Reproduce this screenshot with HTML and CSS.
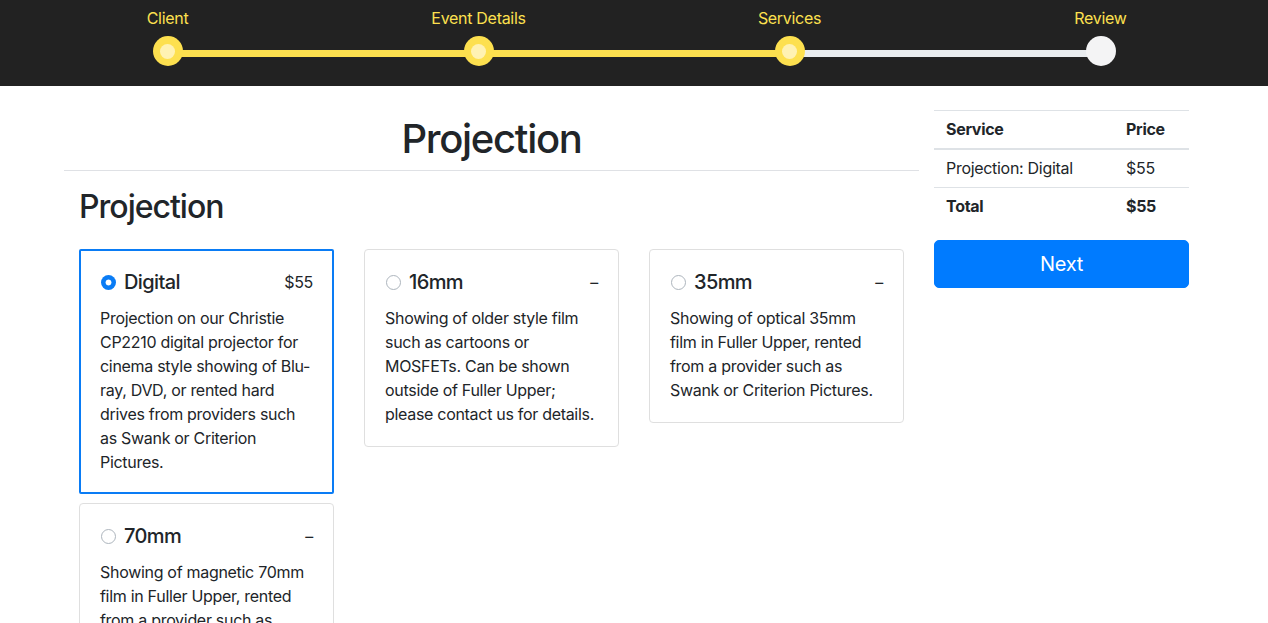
FILE: index.html
```html
<!DOCTYPE html>
<html lang="en">
<head>
<meta charset="utf-8">
<title>Projection</title>
<link rel="stylesheet" href="styles.css">
</head>
<body>
<header class="topbar">
  <ol class="stepper">
    <li class="step done"><span class="step-label">Client</span><span class="step-dot"></span></li>
    <li class="step done"><span class="step-label">Event Details</span><span class="step-dot"></span></li>
    <li class="step current"><span class="step-label">Services</span><span class="step-dot"></span></li>
    <li class="step todo"><span class="step-label">Review</span><span class="step-dot"></span></li>
  </ol>
</header>
<main class="container">
  <section class="col-main">
    <h1 class="page-title">Projection</h1>
    <hr class="divider">
    <h2 class="section-title">Projection</h2>
    <div class="options">
      <div class="card selected">
        <div class="card-head">
          <span class="radio checked"></span>
          <span class="card-title">Digital</span>
          <span class="card-price">$55</span>
        </div>
        <p class="card-text">Projection on our Christie CP2210 digital projector for cinema style showing of Blu-ray, DVD, or rented hard drives from providers such as Swank or Criterion Pictures.</p>
      </div>
      <div class="card">
        <div class="card-head">
          <span class="radio"></span>
          <span class="card-title">16mm</span>
          <span class="card-price">–</span>
        </div>
        <p class="card-text">Showing of older style film such as cartoons or MOSFETs. Can be shown outside of Fuller Upper; please contact us for details.</p>
      </div>
      <div class="card">
        <div class="card-head">
          <span class="radio"></span>
          <span class="card-title">35mm</span>
          <span class="card-price">–</span>
        </div>
        <p class="card-text">Showing of optical 35mm film in Fuller Upper, rented from a provider such as Swank or Criterion Pictures.</p>
      </div>
      <div class="card">
        <div class="card-head">
          <span class="radio"></span>
          <span class="card-title">70mm</span>
          <span class="card-price">–</span>
        </div>
        <p class="card-text">Showing of magnetic 70mm film in Fuller Upper, rented from a provider such as Swank or Criterion Pictures.</p>
      </div>
    </div>
  </section>
  <aside class="col-side">
    <table class="summary">
      <thead>
        <tr><th class="c-service">Service</th><th>Price</th></tr>
      </thead>
      <tbody>
        <tr><td>Projection: Digital</td><td>$55</td></tr>
        <tr class="total"><td>Total</td><td>$55</td></tr>
      </tbody>
    </table>
    <button class="btn-next" type="button">Next</button>
  </aside>
</main>
</body>
</html>
```

FILE: styles.css
```css
* { box-sizing: border-box; }
html, body { margin: 0; padding: 0; }
body {
  font-family: Inter, Roboto, "Liberation Sans", sans-serif;
  font-size: 16px;
  line-height: 24px;
  letter-spacing: -0.3px;
  color: #212529;
  background: #fff;
}

/* Top stepper */
.topbar {
  background: #222222;
  height: 86px;
}
.stepper {
  list-style: none;
  margin: 0;
  padding: 6px 12px 0;
  display: flex;
}
.step {
  flex: 1;
  display: flex;
  flex-direction: column;
  align-items: center;
  position: relative;
}
.step-label {
  color: #fde04f;
  font-size: 16px;
  line-height: 24px;
  height: 24px;
}
.step-dot {
  margin-top: 6px;
  width: 30px;
  height: 30px;
  border-radius: 50%;
  background: #fde04f;
  position: relative;
  z-index: 2;
  display: flex;
  align-items: center;
  justify-content: center;
}
.step.done .step-dot::before,
.step.current .step-dot::before {
  content: "";
  width: 15px;
  height: 15px;
  border-radius: 50%;
  background: #fff2b3;
}
.step.todo .step-dot { background: #f4f4f5; }
.step::after {
  content: "";
  position: absolute;
  left: 50%;
  width: 100%;
  top: 44px;
  height: 7px;
  background: #fde04f;
  z-index: 1;
}
.step.current::after { background: #e9ecef; }
.step:last-child::after { display: none; }

/* Main layout */
.container {
  width: 1140px;
  margin: 0 auto;
  padding-top: 24px;
  display: flex;
  align-items: flex-start;
}
.col-main { width: 855px; }
.col-side { width: 285px; padding: 0 15px; }

.page-title {
  margin: 5px 0 0;
  font-size: 40px;
  line-height: 48px;
  font-weight: 500;
  letter-spacing: -1.3px;
  text-align: center;
}
.divider {
  margin: 7px 0 0;
  border: 0;
  border-top: 1px solid #dfe1e5;
  height: 0;
}
.section-title {
  margin: 17px 0 23px;
  padding: 0 15px;
  font-size: 32px;
  line-height: 38px;
  font-weight: 500;
  letter-spacing: -1px;
}

.options {
  padding: 0 15px;
  display: grid;
  grid-template-columns: repeat(3, 255px);
  column-gap: 30px;
  row-gap: 9px;
  align-items: start;
}
.card {
  border: 1px solid #dfdfdf;
  border-radius: 4px;
  padding: 20px;
  background: #fff;
}
.card.selected {
  border: 2px solid #0a7cf5;
  border-radius: 2px;
  padding: 19px 19px 18px;
}
.card-head {
  display: flex;
  align-items: center;
  height: 24px;
  margin-bottom: 12px;
}
.radio {
  width: 15px;
  height: 15px;
  border-radius: 50%;
  border: 1px solid #adb5bd;
  background: #fff;
  margin: 0 8px 0 1px;
  flex: none;
}
.radio.checked {
  border: none;
  background: radial-gradient(circle, #fff 0 2.6px, #0a7cf5 3.3px);
}
.card-title {
  font-size: 20px;
  line-height: 24px;
  font-weight: 500;
  letter-spacing: -0.6px;
  flex: 1;
}
.card-price {
  font-size: 16px;
}
.card-text {
  margin: 0;
}

/* Summary */
.summary {
  width: 100%;
  border-collapse: collapse;
  margin-bottom: 15px;
}
.summary th,
.summary td {
  text-align: left;
  padding: 6px 12px 7px;
  line-height: 24px;
  vertical-align: top;
  border-top: 1px solid #dee2e6;
}
.summary th { font-weight: 700; border-bottom: 2px solid #dee2e6; }
.summary .c-service { width: 180px; }
.summary tr.total td { font-weight: 700; }

.btn-next {
  display: block;
  width: 100%;
  height: 48px;
  border: 1px solid #007bff;
  border-radius: 5px;
  background: #007bff;
  color: #fff;
  font-family: inherit;
  font-size: 20px;
  line-height: 30px;
  letter-spacing: -0.3px;
  padding: 8px 16px;
  cursor: pointer;
}
```
